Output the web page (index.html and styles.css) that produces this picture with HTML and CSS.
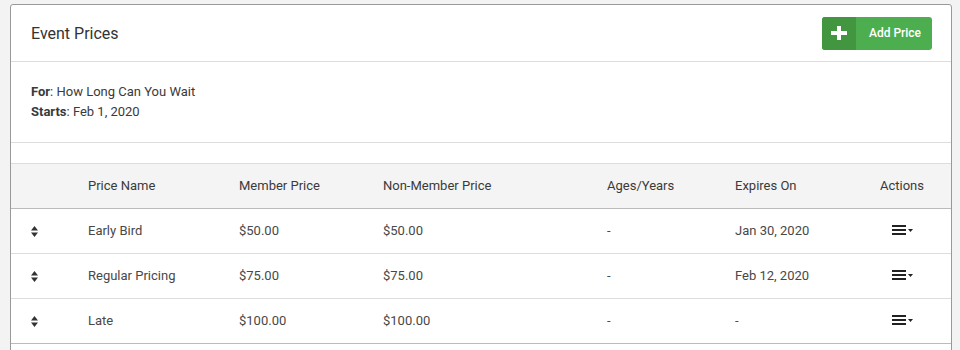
FILE: index.html
```html
<!DOCTYPE html>
<html>
<head>
<meta charset="utf-8">
<link rel="stylesheet" href="styles.css">
</head>
<body>
<div class="panel">
  <div class="panel-head">
    <h1 class="title">Event Prices</h1>
    <button class="btn-add">
      <span class="btn-icon">
        <svg width="16" height="14" viewBox="0 0 16 14"><path d="M6 0h4v5h6v4h-6v5H6V9H0V5h6z" fill="#fff"/></svg>
      </span>
      <span class="btn-label">Add Price</span>
    </button>
  </div>
  <div class="info">
    <div><b>For</b>: How Long Can You Wait</div>
    <div><b>Starts</b>: Feb 1, 2020</div>
  </div>
  <div class="spacer"></div>
  <table class="prices">
    <colgroup>
      <col class="c1"><col class="c2"><col class="c3"><col class="c4"><col class="c5"><col class="c6"><col class="c7">
    </colgroup>
    <thead>
      <tr><th></th><th>Price Name</th><th>Member Price</th><th>Non-Member Price</th><th>Ages/Years</th><th>Expires On</th><th class="act">Actions</th></tr>
    </thead>
    <tbody>
      <tr>
        <td class="sort"><svg width="7" height="11" viewBox="0 0 7 11"><path d="M3.5 0L7 4.5H0z M0 6.5h7L3.5 11z" fill="#333"/></svg></td>
        <td>Early Bird</td><td>$50.00</td><td>$50.00</td><td>-</td><td>Jan 30, 2020</td>
        <td class="act"><svg width="21" height="10" viewBox="0 0 21 10"><rect x="0" y="0" width="14" height="2" fill="#222"/><rect x="0" y="4" width="14" height="2" fill="#222"/><rect x="0" y="8" width="14" height="2" fill="#222"/><path d="M16 4h5l-2.5 3z" fill="#222"/></svg></td>
      </tr>
      <tr>
        <td class="sort"><svg width="7" height="11" viewBox="0 0 7 11"><path d="M3.5 0L7 4.5H0z M0 6.5h7L3.5 11z" fill="#333"/></svg></td>
        <td>Regular Pricing</td><td>$75.00</td><td>$75.00</td><td>-</td><td>Feb 12, 2020</td>
        <td class="act"><svg width="21" height="10" viewBox="0 0 21 10"><rect x="0" y="0" width="14" height="2" fill="#222"/><rect x="0" y="4" width="14" height="2" fill="#222"/><rect x="0" y="8" width="14" height="2" fill="#222"/><path d="M16 4h5l-2.5 3z" fill="#222"/></svg></td>
      </tr>
      <tr>
        <td class="sort"><svg width="7" height="11" viewBox="0 0 7 11"><path d="M3.5 0L7 4.5H0z M0 6.5h7L3.5 11z" fill="#333"/></svg></td>
        <td>Late</td><td>$100.00</td><td>$100.00</td><td>-</td><td>-</td>
        <td class="act"><svg width="21" height="10" viewBox="0 0 21 10"><rect x="0" y="0" width="14" height="2" fill="#222"/><rect x="0" y="4" width="14" height="2" fill="#222"/><rect x="0" y="8" width="14" height="2" fill="#222"/><path d="M16 4h5l-2.5 3z" fill="#222"/></svg></td>
      </tr>
    </tbody>
  </table>
  <div class="tail"></div>
</div>
</body>
</html>
```
FILE: styles.css
```css
html, body {
  margin: 0;
  padding: 0;
  background: #f3f3f3;
}
body {
  padding: 4px 8px 0 10px;
  font-family: Roboto, "Liberation Sans", sans-serif;
  color: #333;
  font-size: 13px;
}
.panel {
  background: #fff;
  border: 1px solid #999;
  border-radius: 3px;
}
.panel-head {
  display: flex;
  align-items: center;
  justify-content: space-between;
  height: 56px;
  padding: 0 19px 0 20px;
  border-bottom: 1px solid #ddd;
}
.title {
  margin: 0;
  font-size: 16px;
  font-weight: 400;
  color: #333;
}
.btn-add {
  display: flex;
  align-items: stretch;
  height: 33px;
  width: 110px;
  padding: 0;
  border: 0;
  border-radius: 3px;
  overflow: hidden;
  background: #4cae4f;
  cursor: pointer;
  font-family: Roboto, "Liberation Sans", sans-serif;
}
.btn-icon {
  width: 34px;
  display: flex;
  align-items: center;
  justify-content: center;
  background: #41963f;
}
.btn-label {
  flex: 1;
  display: flex;
  align-items: center;
  justify-content: center;
  color: #fff;
  font-size: 12px;
  font-weight: 500;
  padding-left: 2px;
}
.info {
  padding: 20px 20px 20px;
  line-height: 20px;
  border-bottom: 1px solid #ddd;
  color: #3a3a3a;
}
.info b {
  font-weight: 700;
}
.spacer {
  height: 20px;
}
.prices {
  width: 100%;
  border-collapse: collapse;
  table-layout: fixed;
}
.c1 { width: 69px; }
.c2 { width: 151px; }
.c3 { width: 144px; }
.c4 { width: 224px; }
.c5 { width: 128px; }
.c6 { width: 126px; }
.c7 { width: 98px; }
.prices th {
  background: #f4f4f4;
  border-top: 1px solid #ddd;
  border-bottom: 1px solid #bbb;
  height: 42px;
  padding: 0 8px 2px;
  text-align: left;
  font-weight: 400;
  color: #3a3a3a;
}
.prices td {
  height: 42px;
  padding: 0 8px 2px;
  border-bottom: 1px solid #ddd;
  color: #484848;
  vertical-align: middle;
}
.prices tbody tr:last-child td {
  border-bottom: 1px solid #bbb;
}
.prices th.act, .prices td.act {
  text-align: center;
}
.prices td.sort {
  padding-left: 20px;
}
.prices svg {
  display: inline-block;
  vertical-align: middle;
}
.prices td.act svg {
  position: relative;
  top: -1px;
}
.tail {
  height: 20px;
}
```
